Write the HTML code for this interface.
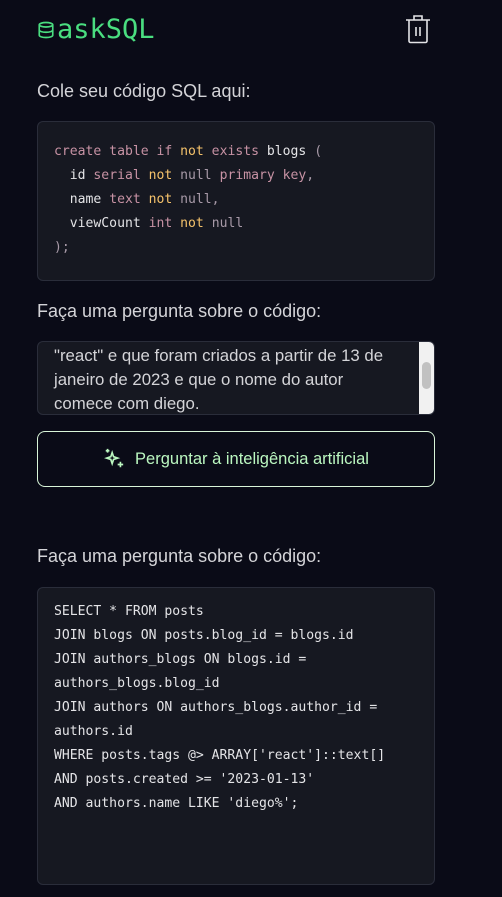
<!DOCTYPE html>
<html><head><meta charset="utf-8"><style>
*{box-sizing:border-box;margin:0;padding:0}
body{width:502px;height:897px;background:#0a0b17;font-family:"Liberation Sans",sans-serif;color:#e4e4e7;position:relative;overflow:hidden}
.abs{position:absolute}
.logo{left:37px;top:14px;color:#4ade80;font-family:"DejaVu Sans Mono","Liberation Mono",monospace;font-size:27px;display:flex;align-items:center;gap:2px}
.label{left:37px;font-size:18px;color:#d4d4d8}
.box{left:37px;width:398px;background:#161821;border:1px solid #2a2d3a;border-radius:6px;font-family:"DejaVu Sans Mono","Liberation Mono",monospace;font-size:13.1px;line-height:24px;padding:16px;white-space:pre;color:#e4e4e7}
.k{color:#c792a4}.y{color:#f5c26b}.n{color:#a89aa8}
.ta{left:37px;top:341px;width:398px;height:74px;background:#161821;border:1px solid #2a2d3a;border-radius:6px;overflow:hidden;font-size:16.8px;line-height:24px;padding:0 40px 0 16px;color:#d4d4d8}
.btn{left:37px;top:431px;width:398px;height:56px;border:1px solid #d9f5d9;border-radius:8px;display:flex;align-items:center;justify-content:center;gap:10px;color:#bbf7c0;font-size:16.5px}
</style></head><body>
<div class="abs logo"><svg width="18" height="18" viewBox="0 0 24 24" fill="none" stroke="#4ade80" stroke-width="2.2"><ellipse cx="12" cy="5" rx="9" ry="3"/><path d="M3 5v14c0 1.7 4 3 9 3s9-1.3 9-3V5"/><path d="M3 12c0 1.7 4 3 9 3s9-1.3 9-3"/></svg>askSQL</div>
<svg class="abs" style="left:405px;top:14px" width="26" height="30" viewBox="0 0 26 30" fill="none" stroke="#e4e4e7" stroke-width="1.6"><path d="M1 6h24M9 6V2h8v4M4 6v21a1.5 1.5 0 0 0 1.5 1.5h15A1.5 1.5 0 0 0 22 27V6M11 13v9M15 13v9"/></svg>
<div class="abs label" style="top:81px">Cole seu código SQL aqui:</div>
<div class="abs box" style="top:121px;height:160px;padding-top:18px"><span class="k">create table if </span><span class="y">not</span><span class="k"> exists </span>blogs <span class="n">(</span>
  id <span class="k">serial </span><span class="y">not</span><span class="n"> null </span><span class="k">primary key</span><span class="n">,</span>
  name <span class="k">text </span><span class="y">not</span><span class="n"> null,</span>
  viewCount <span class="k">int </span><span class="y">not</span><span class="n"> null</span>
<span class="n">);</span></div>
<div class="abs label" style="top:301px">Faça uma pergunta sobre o código:</div>
<div class="abs ta"><div style="margin-top:2px">"react" e que foram criados a partir de 13 de janeiro de 2023 e que o nome do autor comece com diego.</div>
<div class="abs" style="right:0;top:0;width:15px;height:72px;background:#f1f1f1"><div style="position:absolute;left:3px;top:20px;width:9px;height:27px;background:#c1c1c1;border-radius:5px"></div></div></div>
<div class="abs btn"><svg width="22" height="22" viewBox="0 0 24 24" fill="none" stroke="#bbf7c0" stroke-width="1.8"><path d="M10 5l1.5 4.5L16 11l-4.5 1.5L10 17l-1.5-4.5L4 11l4.5-1.5z"/><path d="M19 15v6M16 18h6M5 1v4M3 3h4"/></svg>Perguntar à inteligência artificial</div>
<div class="abs label" style="top:546px">Faça uma pergunta sobre o código:</div>
<div class="abs box" style="top:587px;height:298px;padding-top:12px">SELECT * FROM posts
JOIN blogs ON posts.blog_id = blogs.id
JOIN authors_blogs ON blogs.id =
authors_blogs.blog_id
JOIN authors ON authors_blogs.author_id =
authors.id
WHERE posts.tags @&gt; ARRAY['react']::text[]
AND posts.created &gt;= '2023-01-13'
AND authors.name LIKE 'diego%';</div>
</body></html>
